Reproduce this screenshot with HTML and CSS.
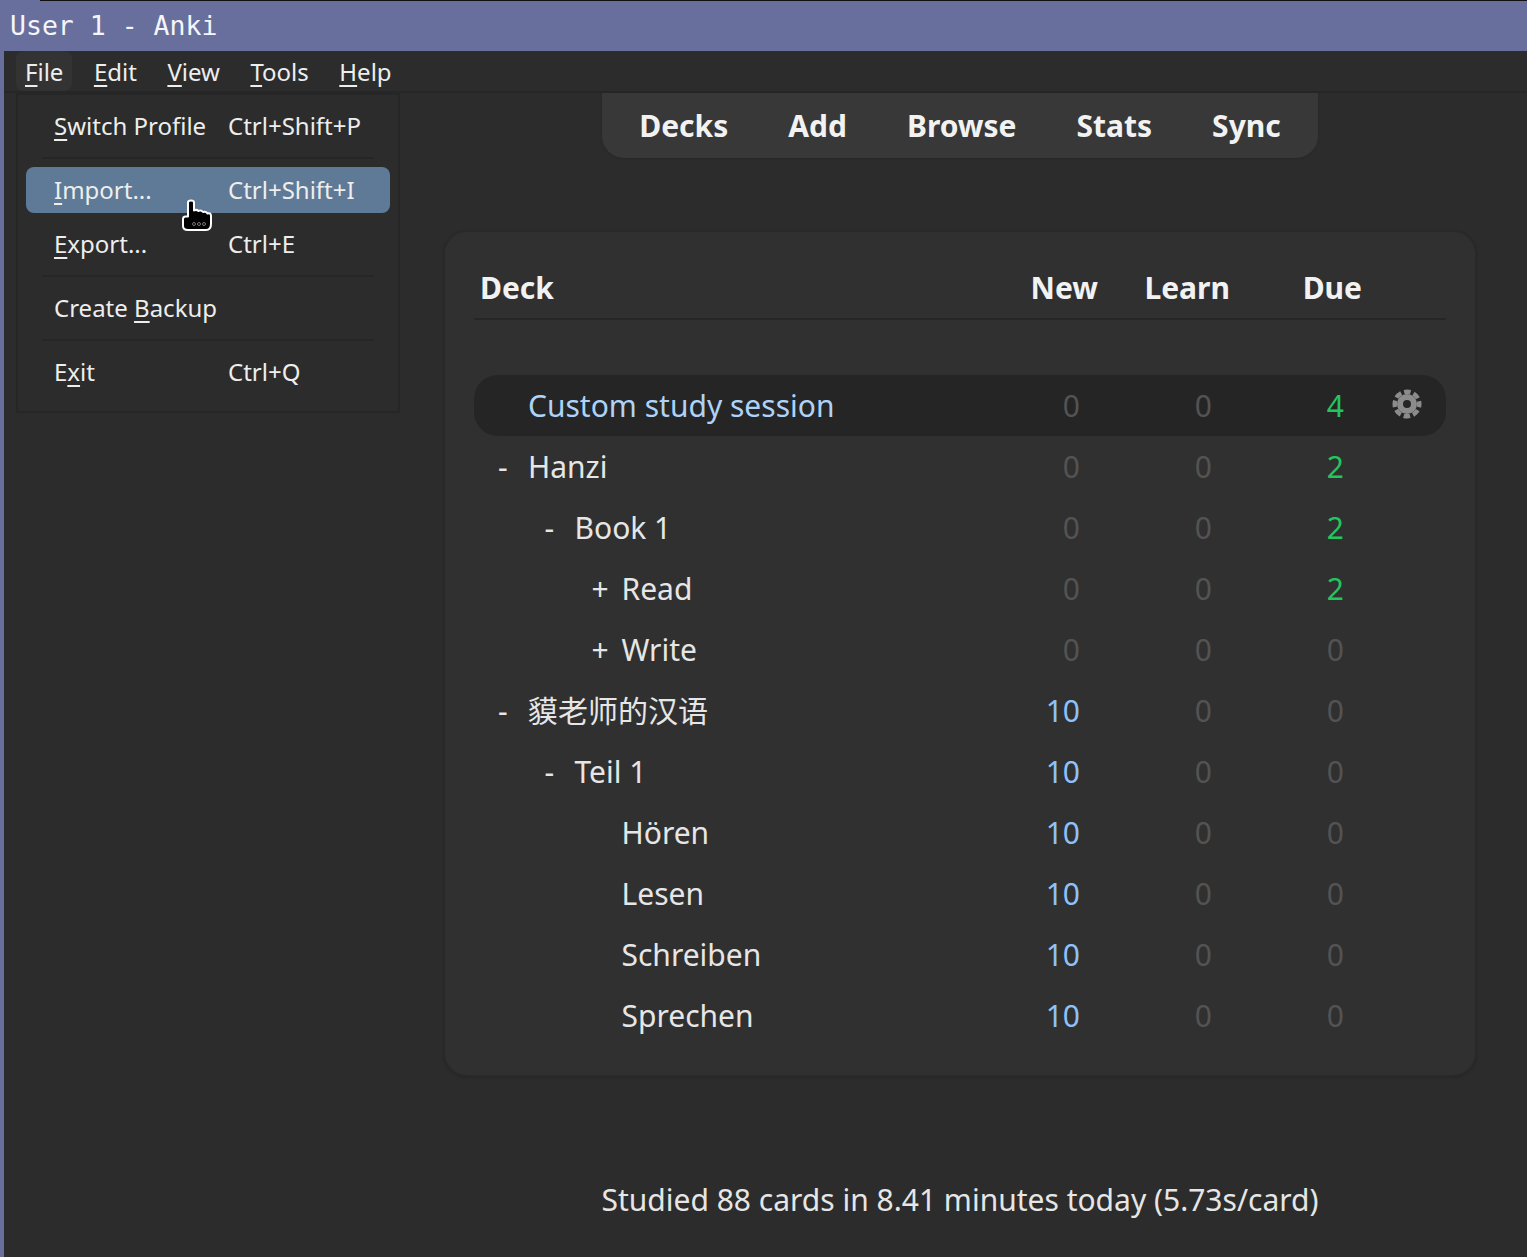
FILE: index.html
```html
<!DOCTYPE html>
<html lang="en">
<head>
  <meta charset="UTF-8">
  <title>User 1 - Anki</title>
  <link rel="stylesheet" href="styles.css">
</head>
<body>
  <div class="titleline"></div>
  <div class="titlebar">User 1 - Anki</div>

  <div class="app">
    <nav class="menubar">
      <span class="menubar-item open"><u>F</u>ile</span>
      <span class="menubar-item"><u>E</u>dit</span>
      <span class="menubar-item"><u>V</u>iew</span>
      <span class="menubar-item"><u>T</u>ools</span>
      <span class="menubar-item"><u>H</u>elp</span>
    </nav>

    <div class="content">
      <div class="dropdown">
        <div class="menu-item"><span class="menu-label"><u>S</u>witch Profile</span><span>Ctrl+Shift+P</span></div>
        <div class="menu-sep"></div>
        <div class="menu-item active"><span class="menu-label"><u>I</u>mport...</span><span>Ctrl+Shift+I</span></div>
        <div class="menu-item"><span class="menu-label"><u>E</u>xport...</span><span>Ctrl+E</span></div>
        <div class="menu-sep"></div>
        <div class="menu-item"><span class="menu-label">Create <u>B</u>ackup</span></div>
        <div class="menu-sep"></div>
        <div class="menu-item"><span class="menu-label">E<u>x</u>it</span><span>Ctrl+Q</span></div>
      </div>

      <svg class="pointer" width="32" height="34" viewBox="0 0 32 34">
        <path d="M6 3.500Q6 1.500 9 1.500T12 3.500V11.500Q14.500 10 16.500 12Q19 10.500 21 13Q24 12 25.500 14.500Q29 13.500 29 17V25Q29 31 24 31H6Q1 31 1 27V20Q1 17.500 3.500 17.500H6Z" fill="#000" stroke="#fff" stroke-width="2" stroke-linejoin="round"/>
        <g fill="none" stroke="#777" stroke-width="1">
          <circle cx="12" cy="25" r="1.500"/>
          <circle cx="17" cy="25" r="1.500"/>
          <circle cx="22" cy="25" r="1.500"/>
        </g>
      </svg>

      <main class="webview">
        <div class="toolbar">
          <span>Decks</span>
          <span>Add</span>
          <span>Browse</span>
          <span>Stats</span>
          <span>Sync</span>
        </div>

        <section class="card">
          <div class="head-row">
            <span class="head-deck">Deck</span>
            <span>New</span>
            <span>Learn</span>
            <span>Due</span>
          </div>

          <div class="deck-row current">
            <span class="deck d0"><span class="toggle"></span><span class="filtered">Custom study session</span></span>
            <span class="zero">0</span><span class="zero">0</span><span class="due">4</span>
            <svg class="gear" width="30" height="30" viewBox="0 0 30 30">
              <circle cx="15" cy="15" r="7" fill="none" stroke="#8c8c8c" stroke-width="6"/>
              <circle cx="15" cy="15" r="12.250" fill="none" stroke="#8c8c8c" stroke-width="4.500" stroke-dasharray="6.500 3.120" stroke-dashoffset="3.250"/>
            </svg>
          </div>
          <div class="deck-row">
            <span class="deck d0"><span class="toggle">-</span>Hanzi</span>
            <span class="zero">0</span><span class="zero">0</span><span class="due">2</span>
          </div>
          <div class="deck-row">
            <span class="deck d1"><span class="toggle">-</span>Book 1</span>
            <span class="zero">0</span><span class="zero">0</span><span class="due">2</span>
          </div>
          <div class="deck-row">
            <span class="deck d2"><span class="toggle">+</span>Read</span>
            <span class="zero">0</span><span class="zero">0</span><span class="due">2</span>
          </div>
          <div class="deck-row">
            <span class="deck d2"><span class="toggle">+</span>Write</span>
            <span class="zero">0</span><span class="zero">0</span><span class="zero">0</span>
          </div>
          <div class="deck-row">
            <span class="deck d0"><span class="toggle">-</span>貘老师的汉语</span>
            <span class="new">10</span><span class="zero">0</span><span class="zero">0</span>
          </div>
          <div class="deck-row">
            <span class="deck d1"><span class="toggle">-</span>Teil 1</span>
            <span class="new">10</span><span class="zero">0</span><span class="zero">0</span>
          </div>
          <div class="deck-row">
            <span class="deck d2"><span class="toggle"></span>Hören</span>
            <span class="new">10</span><span class="zero">0</span><span class="zero">0</span>
          </div>
          <div class="deck-row">
            <span class="deck d2"><span class="toggle"></span>Lesen</span>
            <span class="new">10</span><span class="zero">0</span><span class="zero">0</span>
          </div>
          <div class="deck-row">
            <span class="deck d2"><span class="toggle"></span>Schreiben</span>
            <span class="new">10</span><span class="zero">0</span><span class="zero">0</span>
          </div>
          <div class="deck-row">
            <span class="deck d2"><span class="toggle"></span>Sprechen</span>
            <span class="new">10</span><span class="zero">0</span><span class="zero">0</span>
          </div>
        </section>

        <p class="studied">Studied 88 cards in 8.41 minutes today (5.73s/card)</p>
      </main>
    </div>
  </div>
</body>
</html>
```

FILE: styles.css
```css
html, body {
  height: 100%;
}
body {
  margin: 0;
  background-color: #696f9c;
  font-family: "Noto Sans", "Noto Sans CJK SC", sans-serif;
  color: #eee;
  display: flex;
  flex-direction: column;
  overflow: hidden;
}
u {
  text-decoration-thickness: 2px;
  text-decoration-skip-ink: none;
  text-underline-offset: 4px;
}

.titleline {
  height: 1px;
  margin-left: 40px;
  background-color: #111;
}
.titlebar {
  height: 50px;
  line-height: 50px;
  padding-left: 10px;
  font-family: "DejaVu Sans Mono", monospace;
  font-size: 26.500px;
  color: #f4f6fb;
}

.app {
  flex: 1;
  margin-left: 4px;
  background-color: #2c2c2c;
  display: flex;
  flex-direction: column;
  min-height: 0;
}

.menubar {
  height: 40px;
  padding-left: 12px;
  display: flex;
  gap: 12.500px;
  border-bottom: 2px solid #262626;
  font-size: 24px;
  line-height: 41px;
}
.menubar-item {
  padding: 0 9px;
  border-radius: 8px;
}
.menubar-item.open {
  background-color: #333;
}

.content {
  flex: 1;
  position: relative;
  min-height: 0;
}

.dropdown {
  position: absolute;
  left: 12px;
  top: 0;
  width: 380px;
  height: 308px;
  border: 2px solid #262626;
  background-color: #2c2c2c;
  padding-top: 8px;
  display: flex;
  flex-direction: column;
  font-size: 24px;
  z-index: 2;
}
.menu-item {
  height: 46px;
  line-height: 46px;
  margin: 0 8px;
  padding-left: 28px;
  border-radius: 8px;
  display: flex;
  white-space: nowrap;
}
.menu-item + .menu-item {
  margin-top: 8px;
}
.menu-item.active {
  background-color: #5f7a96;
}
.menu-label {
  width: 174px;
}
.menu-sep {
  height: 2px;
  margin: 8px 24px;
  background-color: #262626;
}

.pointer {
  position: absolute;
  left: 178px;
  top: 106px;
  z-index: 3;
}

.webview {
  height: 100%;
  padding-left: 389px;
  display: flex;
  flex-direction: column;
  align-items: center;
}

.toolbar {
  height: 65px;
  padding: 0 37px;
  display: flex;
  gap: 60px;
  align-items: center;
  background-color: #383838;
  border-radius: 0 0 22px 22px;
  box-shadow: 0 1px 2px #282828;
  font-size: 30px;
  font-weight: 700;
  color: #f2f2f2;
}

.card {
  width: 972px;
  height: 843px;
  margin-top: 72px;
  padding: 0 29px;
  border: 2px solid #292929;
  border-radius: 24px;
  background-color: #303030;
  box-shadow: 0 1px 2px #262626;
  font-size: 30px;
}

.head-row {
  height: 88px;
  margin-bottom: 55px;
  display: grid;
  grid-template-columns: 1fr 132px 132px 132px 84px;
  align-items: end;
  line-height: 60px;
  font-weight: 700;
  text-align: right;
  color: #f2f2f2;
  border-bottom: 2px solid #262626;
  box-sizing: border-box;
}
.head-deck {
  text-align: left;
  padding-left: 6px;
}

.deck-row {
  height: 61px;
  line-height: 61px;
  display: grid;
  grid-template-columns: 1fr 132px 132px 132px 102px;
  text-align: right;
  color: #e6e6e6;
  border-radius: 24px;
}
.deck-row.current {
  background-color: #252525;
}
.deck {
  display: flex;
  text-align: left;
  white-space: nowrap;
}
.d0 { padding-left: 24px; }
.d1 { padding-left: 70.500px; }
.d2 { padding-left: 117.500px; }
.toggle {
  width: 30px;
}
.filtered { color: #aed3f7; }
.zero { color: #535353; }
.new { color: #8fc1f9; }
.due { color: #22c55e; }
.gear {
  justify-self: center;
  align-self: center;
  margin-top: -3px;
  margin-left: 24px;
}

.studied {
  margin: 103px 0 0;
  font-size: 30px;
  line-height: 40px;
  color: #e6e6e6;
}
```
